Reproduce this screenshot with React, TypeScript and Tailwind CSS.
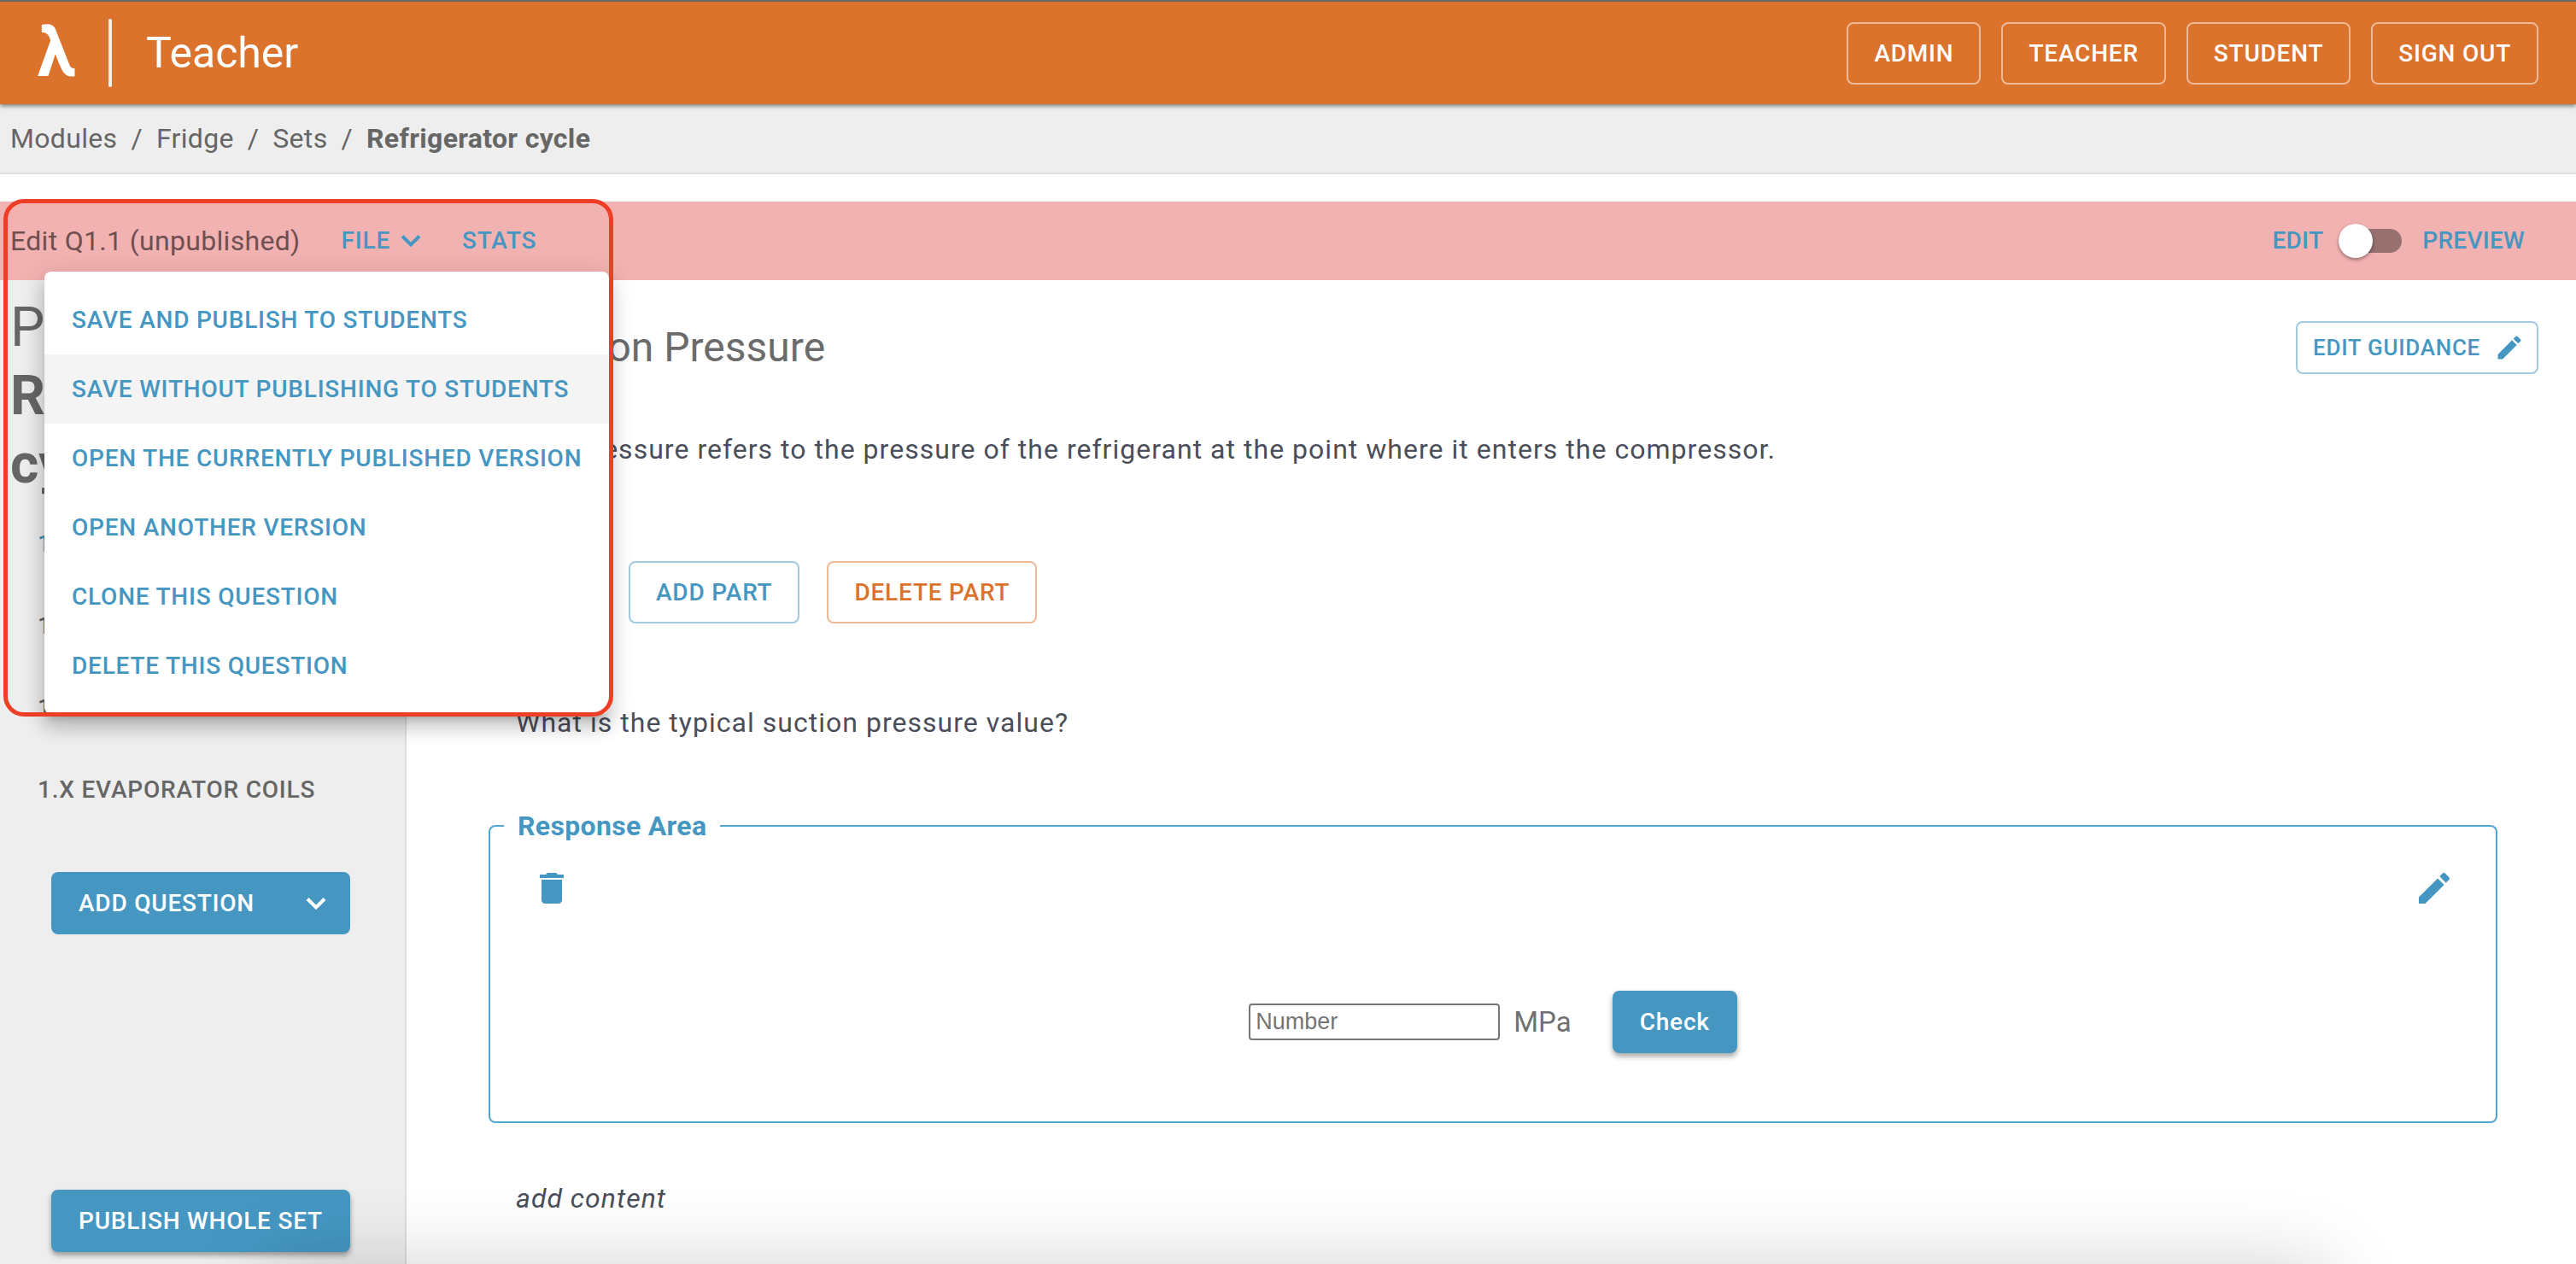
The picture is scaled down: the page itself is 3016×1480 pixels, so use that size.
import type { ReactNode } from "react";
import { MdDelete, MdEdit } from "react-icons/md";

const outline =
  "rounded-lg border-2 px-[30px] py-[10px] text-[28px] leading-[49px] font-medium tracking-[0.028em] uppercase";

const roles = ["Admin", "Teacher", "Student", "Sign out"];
const trail = ["Modules", "Fridge", "Sets"];
const fileActions = [
  "Save and publish to students",
  "Save without publishing to students",
  "Open the currently published version",
  "Open another version",
  "Clone this question",
  "Delete this question",
];
const questions = [
  { label: "1.1", current: true },
  { label: "1.2", current: false },
  { label: "1.3", current: false },
  { label: "1.X Evaporator coils", current: false },
];

function Chevron() {
  return (
    <svg viewBox="0 0 24 16" className="h-4 w-6" fill="none" stroke="currentColor" strokeWidth="4" aria-hidden="true">
      <path d="M2 2.5 L12 12.5 L22 2.5" />
    </svg>
  );
}

function Logo() {
  return (
    <svg viewBox="43 54 131 186" className="mb-1.5 h-[62px] w-11" fill="currentColor" role="img" aria-label="Lambda">
      <path d="M57 57 C80 52 98 54 106 74 L155 199 Q160 211 173 211 L173 238 Q141 243 128 215 Q115 190 105 160 L80 237 L43 237 L88 112 L84 101 Q77 83 57 84 Z" />
    </svg>
  );
}

function Header() {
  return (
    <header className="relative z-10 flex min-h-[122px] items-center justify-between border-t-2 border-[#666] bg-[#dc732d] pr-11 pl-11 text-white shadow-[0_2px_5px_rgba(0,0,0,0.5)]">
      <div className="flex items-center">
        <Logo />
        <span className="ml-[39px] h-20 w-1 rounded-full bg-[#f0f0f0]" />
        <h1 className="ml-10 text-[50px] leading-[64px]">Teacher</h1>
      </div>
      <nav className="flex gap-6">
        {roles.map((role) => (
          <button key={role} className={`${outline} border-white/50`}>
            {role}
          </button>
        ))}
      </nav>
    </header>
  );
}

function Breadcrumbs() {
  return (
    <nav aria-label="Breadcrumb" className="border-b-2 border-[#dedede] bg-[#eee] px-3 py-4 text-[#666]">
      <ol className="flex text-[32px] leading-[48px] tracking-[0.01em]">
        {trail.map((name) => (
          <li key={name}>
            <a href="#">{name}</a>
            <span className="mx-4">/</span>
          </li>
        ))}
        <li className="font-bold">Refrigerator cycle</li>
      </ol>
    </nav>
  );
}

function FileMenu() {
  return (
    <div
      role="menu"
      className="absolute top-[82px] left-[52px] z-20 flex flex-col rounded-lg bg-white py-4 shadow-[0_10px_10px_-6px_rgba(0,0,0,0.2),0_16px_20px_2px_rgba(0,0,0,0.14),0_6px_28px_4px_rgba(0,0,0,0.12)]"
    >
      {fileActions.map((action, i) => (
        <button
          key={action}
          role="menuitem"
          className={`px-8 py-4 text-left text-[28px] leading-[49px] font-medium tracking-[0.028em] text-[#4597c2] uppercase ${i === 1 ? "bg-[#f4f4f4]" : "bg-transparent"}`}
        >
          {action}
        </button>
      ))}
    </div>
  );
}

function EditorBar() {
  return (
    <div className="relative mt-8 flex items-center justify-between bg-[#f3b2b2] py-[22px] pr-[60px] pl-3 text-[28px] leading-[48px] font-medium text-[#4597c2]">
      <div className="flex items-center tracking-[0.028em]">
        <h2 className="text-[32px] font-normal tracking-[0.01em] text-[#6f5050]">Edit Q1.1 (unpublished)</h2>
        <button className="ml-12 flex items-center gap-3 uppercase">
          File
          <Chevron />
        </button>
        <button className="ml-12 uppercase">Stats</button>
      </div>
      <label className="flex items-center tracking-[0.01em] uppercase">
        Edit
        <input
          type="checkbox"
          role="switch"
          aria-label="Preview"
          className="relative mr-6 ml-6 h-7 w-[68px] appearance-none rounded-full bg-[#987070] before:absolute before:-top-1.5 before:-left-1.5 before:size-10 before:rounded-full before:bg-white before:shadow-[0_2px_4px_rgba(0,0,0,0.4)]"
        />
        Preview
      </label>
      <FileMenu />
      <div className="pointer-events-none absolute -top-[3px] left-1 z-30 h-[606px] w-[714px] rounded-3xl border-[5px] border-[#ee3f26]" />
    </div>
  );
}

function Sidebar() {
  return (
    <aside className="flex w-[476px] shrink-0 flex-col border-r-2 border-[#dedede] bg-[#eee] pt-4 pb-3.5 text-[#666]">
      <h2 className="px-3 text-[64px] leading-[80px]">
        PS
        <strong className="block font-bold">Refrigerator cycle</strong>
      </h2>
      <ul className="mt-[5px]">
        {questions.map((q) => (
          <li key={q.label}>
            <a
              href="#"
              className={`block py-6 pl-11 text-[28px] leading-[48px] font-medium tracking-[0.028em] uppercase ${q.current ? "text-[#4597c2]" : "text-[#666]"}`}
            >
              {q.label}
            </a>
          </li>
        ))}
      </ul>
      <button className="mx-[60px] mt-12 flex w-[350px] items-center justify-between rounded-lg bg-[#4597c2] py-3 pr-7 pl-8 text-[28px] leading-[49px] font-medium tracking-[0.028em] text-white uppercase">
        Add question
        <Chevron />
      </button>
      <button className="mx-[60px] mt-[299px] w-[350px] rounded-lg bg-[#4597c2] py-3 text-[28px] leading-[49px] font-medium tracking-[0.028em] text-white uppercase shadow-[0_4px_6px_rgba(0,0,0,0.35)]">
        Publish whole set
      </button>
    </aside>
  );
}

function Prose({ children, className }: { children: ReactNode; className: string }) {
  return <p className={`text-[32px] leading-[48px] tracking-[0.032em] text-[#4a4e5a] ${className}`}>{children}</p>;
}

function ResponseArea() {
  return (
    <fieldset className="mt-[73px] mr-12 -ml-8 rounded-lg border-2 border-[#50a7d0] px-4 pb-20">
      <legend className="px-4 text-[32px] leading-[48px] font-bold tracking-[0.01em] text-[#4597c2]">
        Response Area
      </legend>
      <div className="flex justify-between px-8 pt-[25px] text-[48px] text-[#4597c2]">
        <button aria-label="Delete response area">
          <MdDelete />
        </button>
        <button aria-label="Edit response area">
          <MdEdit />
        </button>
      </div>
      <div className="mt-24 flex items-center justify-center">
        <label className="flex items-center gap-4 text-[33px] leading-[48px] text-[#707070]">
          <input
            type="text"
            placeholder="Number"
            className="w-[294px] rounded border-2 border-[#767676] bg-white px-1.5 font-['Liberation_Sans'] text-[27px] leading-[39px] placeholder:text-[#757575]"
          />
          MPa
        </label>
        <button className="ml-12 rounded-lg bg-[#4597c2] px-8 py-3 text-[28px] leading-[49px] font-medium tracking-[0.028em] text-white shadow-[0_4px_6px_rgba(0,0,0,0.35)]">
          Check
        </button>
      </div>
    </fieldset>
  );
}

function Editor() {
  return (
    <main className="min-w-0 flex-1 pt-12 pr-11 pl-32">
      <div className="flex items-center justify-between">
        <h2 className="text-5xl leading-[62px] text-[#6b6b6b]">Suction Pressure</h2>
        <button className="flex items-center gap-4 rounded-lg border-2 border-[#4597c2]/50 py-[6px] pr-3.5 pl-[18px] text-[26px] leading-[46px] font-medium tracking-[0.028em] text-[#4597c2] uppercase">
          Edit guidance
          <MdEdit className="size-9" />
        </button>
      </div>
      <Prose className="mt-16">
        Low pressure refers to the pressure of the refrigerant at the point where it enters the compressor.
      </Prose>
      <div className="mt-[107px] flex gap-8 pl-[132px]">
        <button className={`${outline} border-[#4597c2]/50 text-[#4597c2]`}>Add part</button>
        <button className={`${outline} border-[#dc732d]/50 text-[#dc732d]`}>Delete part</button>
      </div>
      <Prose className="mt-[92px]">What is the typical suction pressure value?</Prose>
      <ResponseArea />
      <Prose className="mt-16 italic">add content</Prose>
    </main>
  );
}

export default function App() {
  return (
    <div className="relative flex min-h-screen flex-col bg-white font-[Roboto,sans-serif]">
      <Header />
      <Breadcrumbs />
      <EditorBar />
      <div className="flex flex-1">
        <Sidebar />
        <Editor />
      </div>
      <div className="pointer-events-none absolute inset-x-0 bottom-0 h-32 overflow-hidden">
        <div className="absolute top-full right-[290px] left-[310px] h-40 rounded-3xl shadow-[0_0_90px_rgba(0,0,0,0.18)]" />
      </div>
    </div>
  );
}
